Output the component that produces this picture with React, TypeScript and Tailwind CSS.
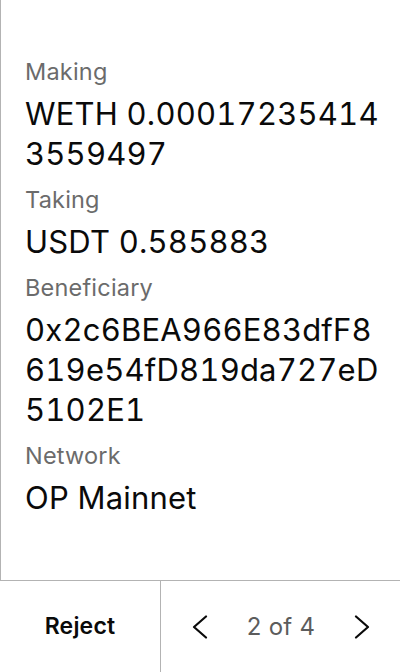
const rows = [
  { label: "Making", value: "WETH 0.000172354143559497" },
  { label: "Taking", value: "USDT 0.585883" },
  { label: "Beneficiary", value: "0x2c6BEA966E83dfF8619e54fD819da727eD5102E1" },
  { label: "Network", value: "OP Mainnet" },
];

const Chevron = ({ dir }: { dir: "left" | "right" }) => (
  <svg width="16" height="24" viewBox="0 0 16 24" fill="none" stroke="currentColor" strokeWidth="2.2" strokeLinecap="round" strokeLinejoin="round">
    {dir === "left" ? <polyline points="14,1.5 2,12 14,22.5" /> : <polyline points="2,1.5 14,12 2,22.5" />}
  </svg>
);

export default function App() {
  return (
    <div className="flex h-[672px] w-[400px] flex-col bg-white font-['Inter',sans-serif] text-black">
      {/* Details */}
      <div className="flex flex-1 flex-col gap-3 border-l border-[#b3b3b3] pl-6 pr-4 pt-[58px]">
        {rows.map((row) => (
          <div key={row.label} className="flex flex-col gap-2">
            <div className="text-[23.5px] leading-[28px] tracking-[0.2px] text-[#6b6b6b]">{row.label}</div>
            <div className="break-all text-[31px] leading-[40px] tracking-[0.2px] tabular-nums text-[#0a0a0a]">
              {row.value}
            </div>
          </div>
        ))}
      </div>

      {/* Footer */}
      <div className="flex h-[92px] border-t border-[#b3b3b3]">
        <button className="flex w-[160px] items-center justify-center text-[23px] font-semibold tracking-[0.2px] text-[#0a0a0a]">
          Reject
        </button>
        <div className="flex flex-1 items-center justify-between border-l border-[#b3b3b3] pl-[31px] pr-[30px]">
          <button className="text-[#0a0a0a]">
            <Chevron dir="left" />
          </button>
          <span className="text-[24px] tracking-[0.3px] text-[#5c5c5c]">2 of 4</span>
          <button className="text-[#0a0a0a]">
            <Chevron dir="right" />
          </button>
        </div>
      </div>
    </div>
  );
}
